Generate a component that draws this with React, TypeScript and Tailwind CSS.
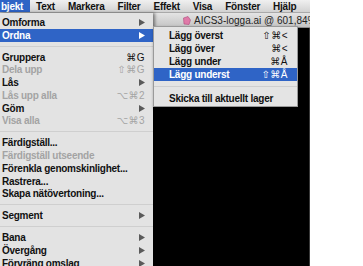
import React from 'react'

type Item =
  | { sep: true }
  | { label: string; sc?: string; arrow?: boolean; off?: boolean; on?: boolean }

const mainItems: Item[] = [
  { label: 'Omforma', arrow: true },
  { label: 'Ordna', arrow: true, on: true },
  { sep: true },
  { label: 'Gruppera', sc: '⌘G' },
  { label: 'Dela upp', sc: '⇧⌘G', off: true },
  { label: 'Lås', arrow: true },
  { label: 'Lås upp alla', sc: '⌥⌘2', off: true },
  { label: 'Göm', arrow: true },
  { label: 'Visa alla', sc: '⌥⌘3', off: true },
  { sep: true },
  { label: 'Färdigställ...' },
  { label: 'Färdigställ utseende', off: true },
  { label: 'Förenkla genomskinlighet...' },
  { label: 'Rastrera...' },
  { label: 'Skapa nätövertoning...' },
  { sep: true },
  { label: 'Segment', arrow: true },
  { sep: true },
  { label: 'Bana', arrow: true },
  { label: 'Övergång', arrow: true },
  { label: 'Förvräng omslag', arrow: true },
]

const subItems: Item[] = [
  { label: 'Lägg överst', sc: '⇧⌘<' },
  { label: 'Lägg över', sc: '⌘<' },
  { label: 'Lägg under', sc: '⌘Å' },
  { label: 'Lägg underst', sc: '⇧⌘Å', on: true },
  { sep: true },
  { label: 'Skicka till aktuellt lager' },
]

function Arrow({ white }: { white?: boolean }) {
  return (
    <svg width="6" height="7" viewBox="0 0 6 7" className="shrink-0">
      <path d="M0 0 L6 3.5 L0 7 Z" fill={white ? '#ffffff' : '#5a5a5a'} />
    </svg>
  )
}

function Row({ item, sub }: { item: Item; sub?: boolean }) {
  if ('sep' in item) {
    return (
      <div className={sub ? 'h-[11px] flex items-center' : 'h-[9px] flex items-center'}>
        <div className="h-px w-full bg-[#cfcfcf]" />
      </div>
    )
  }
  const color = item.on ? 'text-white bg-[#2f64c6]' : item.off ? 'text-[#a3a3a3]' : 'text-[#111]'
  return (
    <div
      className={`flex items-center ${sub ? 'h-[13px] pl-[15px] pr-[9px]' : 'h-[12.8px] pl-[2px] pr-[8px]'} ${color}`}
    >
      <span className="flex-1 whitespace-nowrap">{item.label}</span>
      {item.sc && <span className="whitespace-nowrap tracking-[0.5px] font-normal">{item.sc}</span>}
      {item.arrow && <Arrow white={item.on} />}
    </div>
  )
}

function Cursor() {
  return (
    <svg width="9" height="13" viewBox="0 0 9 13" className="absolute left-[240px] top-[71px]">
      <path d="M1 1 L1 11 L3.5 8.5 L5.5 12 L7 11.3 L5 8 L8 8 Z" fill="#000" stroke="#fff" strokeWidth="0.9" />
    </svg>
  )
}

export default function App() {
  const menuBar = ['Text', 'Markera', 'Filter', 'Effekt', 'Visa', 'Fönster', 'Hjälp']
  return (
    <div className="relative w-[363px] h-[266px] bg-white overflow-hidden font-['Liberation_Sans','DejaVu_Sans',sans-serif] text-[10px] font-bold tracking-[-0.25px]">
      <div className="w-[310px] h-full flex flex-col">
        {/* menu bar */}
        <div className="h-[13px] flex items-center bg-gradient-to-b from-[#f0f0f0] to-[#d2d2d2] border-b border-[#a9a9a9] text-[#111] shrink-0">
          <div className="h-full flex items-center bg-[#2f64c6] text-white pl-[1px] pr-[7px]">bjekt</div>
          <div className="flex gap-[13px] pl-[6px]">
            {menuBar.map((m) => (
              <span key={m}>{m}</span>
            ))}
          </div>
        </div>

        <div className="flex flex-1 min-h-0">
          {/* main menu */}
          <div className="w-[153px] shrink-0 bg-[#e3e3e3] pt-[3px] shadow-[2px_0_3px_rgba(0,0,0,0.45)] z-10">
            {mainItems.map((it, i) => (
              <Row key={i} item={it} />
            ))}
          </div>

          {/* document window */}
          <div className="flex-1 flex flex-col min-w-0">
            <div className="h-[15px] shrink-0 flex items-center bg-gradient-to-b from-[#e4e4e4] to-[#c4c4c4] border-b border-[#8c8c8c] pl-[30px] gap-[3px] font-normal text-[#222] tracking-normal whitespace-nowrap overflow-hidden">
              <svg width="8" height="9" viewBox="0 0 8 9" className="shrink-0">
                <path d="M0.5 2 L5 0.5 L7.5 4 L6 8.5 L1 8 Z" fill="#e07aa8" stroke="#b04a7c" strokeWidth="0.6" />
              </svg>
              <span>AICS3-logga.ai @ 601,84%</span>
            </div>
            <div className="flex-1 bg-black border-r border-[#3a3a3a]" />
          </div>
        </div>
      </div>

      {/* submenu */}
      <div className="absolute left-[153px] top-[26px] w-[145px] bg-[#e4e4e4] pt-[2px] pb-[1px] border border-[#9a9a9a] shadow-[1px_2px_3px_rgba(0,0,0,0.5)] z-20">
        {subItems.map((it, i) => (
          <Row key={i} item={it} sub />
        ))}
      </div>

      <div className="z-30">
        <Cursor />
      </div>
    </div>
  )
}
